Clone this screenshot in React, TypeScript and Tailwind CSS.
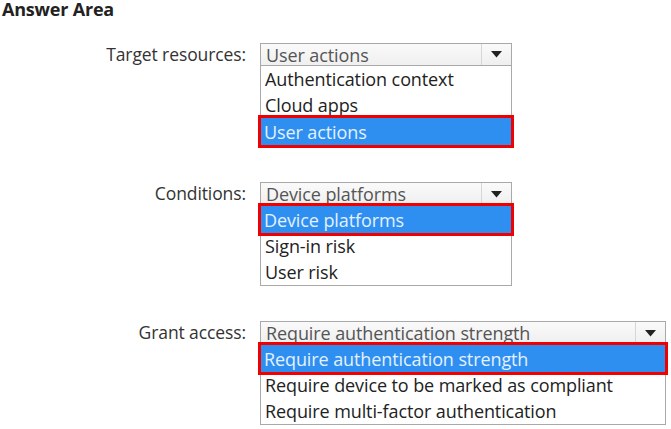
import React from "react";

const font = { fontFamily: '"Open Sans", "Noto Sans", sans-serif' };

function Arrow() {
  return (
    <div className="w-[30px] h-full flex items-center justify-center border-l border-[#d6d6d6]">
      <svg width="11" height="7" viewBox="0 0 11 7">
        <polygon points="0,0 11,0 5.5,6.5" fill="#222" />
      </svg>
    </div>
  );
}

type SelProps = {
  value: string;
  items: string[];
  selected: number;
  width: string;
  headerH: string;
};

function Select({ value, items, selected, width, headerH }: SelProps) {
  return (
    <div className={`${width} border border-[#a9a9a9] bg-white text-[18px] leading-[22px] tracking-[-0.1px]`}>
      <div className={`${headerH} flex items-stretch bg-gradient-to-b from-[#fafafa] to-[#efefef] border-b border-[#a9a9a9]`}>
        <div className="flex-1 min-w-0 pl-[5px] flex items-center text-[#555] whitespace-nowrap">{value}</div>
        <Arrow />
      </div>
      <div className="flex flex-col">
        {items.map((it, i) =>
          i === selected ? (
            <div
              key={i}
              className="h-[27px] flex items-center pl-[3px] bg-[#2f8ff0] text-[#e3f1ff] outline-[3px] outline-solid outline-[#f20000] relative z-10 whitespace-nowrap"
            >
              {it}
            </div>
          ) : (
            <div key={i} className="h-[26px] flex items-center pl-[4px] text-[#222] whitespace-nowrap">
              {it}
            </div>
          )
        )}
      </div>
    </div>
  );
}

function Row({ label, children, className }: { label: string; children: React.ReactNode; className?: string }) {
  return (
    <div className={`flex items-start ${className ?? ""}`}>
      <div className="w-[247px] pr-[1px] text-right text-[#333] text-[17.5px] leading-[23px] tracking-[-0.1px] h-[23px] flex items-center justify-end whitespace-nowrap">
        {label}
      </div>
      <div className="ml-[13px]">{children}</div>
    </div>
  );
}

export default function App() {
  return (
    <div className="w-[671px] h-[429px] bg-white overflow-hidden" style={font}>
      <div className="pl-[2px] font-bold text-[18px] tracking-[-0.2px] text-[#222] h-[19px] leading-[19px]">Answer Area</div>
      <Row label="Target resources:" className="mt-[24px]">
        <Select
          value="User actions"
          items={["Authentication context", "Cloud apps", "User actions"]}
          selected={2}
          width="w-[252px]"
          headerH="h-[22px]"
        />
      </Row>
      <Row label="Conditions:" className="mt-[36px]">
        <Select
          value="Device platforms"
          items={["Device platforms", "Sign-in risk", "User risk"]}
          selected={0}
          width="w-[252px]"
          headerH="h-[23px]"
        />
      </Row>
      <Row label="Grant access:" className="mt-[35px]">
        <Select
          value="Require authentication strength"
          items={["Require authentication strength", "Require device to be marked as compliant", "Require multi-factor authentication"]}
          selected={0}
          width="w-[406px]"
          headerH="h-[23px]"
        />
      </Row>
    </div>
  );
}
